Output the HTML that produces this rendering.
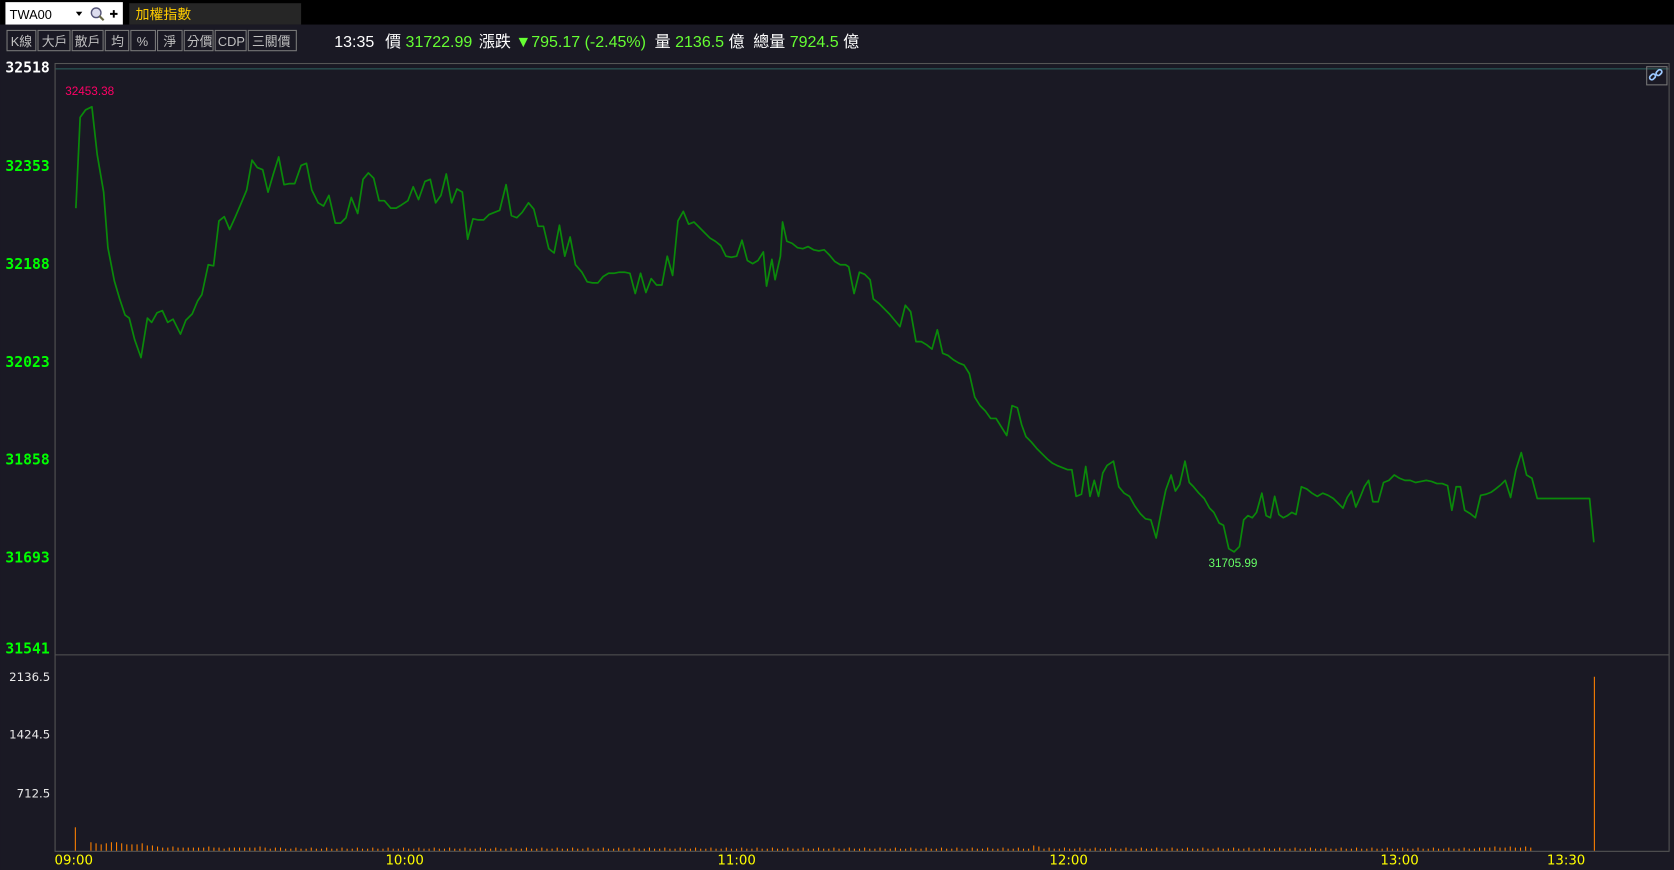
<!DOCTYPE html>
<html><head><meta charset="utf-8"><style>
html,body{margin:0;padding:0;background:#1a1924;overflow:hidden}
svg{display:block}
text{font-family:"Liberation Sans","Noto Sans CJK TC",sans-serif}
.lbl{font-family:"DejaVu Sans Mono","Liberation Mono",monospace;font-weight:bold;font-size:13.8px;fill:#00ff00}
.vl{font-family:"DejaVu Sans","Liberation Sans",sans-serif;font-size:11px;fill:#e8e8e8}
.tm{font-family:"DejaVu Sans","Liberation Sans",sans-serif;font-size:12.5px;fill:#ffff00}
.btn{fill:none;stroke:#7a7a7a;stroke-width:1}
.bt{font-size:12px;fill:#c0c0c0}
</style></head><body>
<svg width="1674" height="870" viewBox="0 0 1568 815" xmlns="http://www.w3.org/2000/svg">
<rect x="0" y="0" width="1568" height="815" fill="#1a1924"/>
<rect x="0" y="0" width="1568" height="23" fill="#000"/>
<rect x="5" y="2" width="110" height="21" fill="#fff"/>
<text x="9" y="18" font-size="12" fill="#000">TWA00</text>
<path d="M71 11 l6 0 l-3 4z" fill="#000"/>
<circle cx="90" cy="12" r="4.5" fill="#dde" stroke="#557" stroke-width="1.3"/>
<path d="M93 15 l4 4" stroke="#664" stroke-width="2"/>
<path d="M103 13h7M106.5 9.5v7" stroke="#000" stroke-width="1.8"/>
<rect x="121" y="3" width="161" height="20" fill="#262626"/>
<text x="127" y="18" font-size="13" fill="#ffcc00">加權指數</text>

<g>
<rect class="btn" x="6.5" y="28.5" width="27" height="19"/><text class="bt" x="10" y="43">K線</text>
<rect class="btn" x="35.5" y="28.5" width="30" height="19"/><text class="bt" x="39" y="43">大戶</text>
<rect class="btn" x="67.5" y="28.5" width="29" height="19"/><text class="bt" x="70" y="43">散戶</text>
<rect class="btn" x="98.5" y="28.5" width="22" height="19"/><text class="bt" x="104" y="43">均</text>
<rect class="btn" x="122.5" y="28.5" width="23" height="19"/><text class="bt" x="128" y="43">%</text>
<rect class="btn" x="147.5" y="28.5" width="23" height="19"/><text class="bt" x="153" y="43">淨</text>
<rect class="btn" x="172.5" y="28.5" width="27" height="19"/><text class="bt" x="175" y="43">分價</text>
<rect class="btn" x="201.5" y="28.5" width="29" height="19"/><text class="bt" x="204" y="43">CDP</text>
<rect class="btn" x="232.5" y="28.5" width="45" height="19"/><text class="bt" x="236" y="43">三關價</text>
</g>
<text x="313" y="44" font-size="15" fill="#fff">13:35 <tspan dx="6">價</tspan> <tspan fill="#66ff33">31722.99</tspan> <tspan dx="2">漲跌</tspan> <tspan fill="#66ff33">▼795.17 (-2.45%)</tspan> <tspan dx="4">量</tspan> <tspan fill="#66ff33">2136.5</tspan> 億 <tspan dx="4">總量</tspan> <tspan fill="#66ff33">7924.5</tspan> 億</text>

<rect x="51.5" y="59.5" width="1512" height="738" fill="none" stroke="#555" stroke-width="1"/>
<line x1="52" y1="64.5" x2="1563" y2="64.5" stroke="#2e6660" stroke-width="1"/>
<line x1="52" y1="613.5" x2="1563" y2="613.5" stroke="#555" stroke-width="1"/>
<rect x="1542.5" y="62.5" width="19" height="17" fill="none" stroke="#777"/>
<g fill="none" stroke="#9cc8ff" stroke-width="1.6">
<rect x="1545" y="70" width="6" height="4" rx="2" transform="rotate(-45 1548 72)"/>
<rect x="1551" y="66" width="6" height="4" rx="2" transform="rotate(-45 1554 68)"/>
</g>

<text class="lbl" x="5" y="68" style="fill:#fff">32518</text>
<text class="lbl" x="5" y="160">32353</text>
<text class="lbl" x="5" y="252">32188</text>
<text class="lbl" x="5" y="344">32023</text>
<text class="lbl" x="5" y="435">31858</text>
<text class="lbl" x="5" y="527">31693</text>
<text class="lbl" x="5" y="612">31541</text>

<text x="61" y="89" font-size="11" fill="#ff0066">32453.38</text>
<text x="1132" y="531" font-size="11" fill="#66ff66">31705.99</text>

<polyline fill="none" stroke="#0a8a0a" stroke-width="1.6" stroke-linejoin="round" points="71,195 75,110 80,103 86,100 91,145 97,180 101,232 107,263 112,280 117,295 121,298 126,318 132,335 138,298 142,302 147,293 152,291 157,302 162,299 169,313 174,300 180,294 185,282 189,276 195,248 200,249 205,207 210,203 215,215 220,204 226,190 231,178 236,150 241,157 246,159 251,180 256,163 261,147 266,173 271,172 276,172 282,155 287,153 292,178 298,190 303,193 308,183 314,209 319,209 324,204 329,185 335,200 340,168 345,162 350,167 355,188 360,188 366,195 371,195 376,192 382,188 387,175 392,187 398,170 403,168 408,190 413,183 418,163 423,190 428,177 433,180 438,224 443,205 448,206 453,206 458,201 463,199 468,197 474,173 479,202 484,204 489,199 495,190 500,196 504,212 509,212 514,233 519,237 524,211 529,240 534,222 539,248 545,255 550,264 555,265 560,265 565,259 570,256 575,256 580,255 585,255 590,256 595,275 600,256 605,274 610,261 615,267 620,267 625,240 630,258 635,207 640,198 645,210 650,208 655,213 660,218 665,223 670,226 675,230 680,240 685,241 690,240 695,225 700,244 705,247 710,244 715,236 718,268 723,243 726,262 731,240 733,208 737,226 742,228 747,232 752,233 757,231 762,234 767,235 772,234 777,239 782,245 787,248 792,248 795,250 800,275 805,255 810,257 815,262 818,280 823,284 828,289 833,294 838,300 843,306 848,286 853,292 858,320 863,320 868,323 873,327 878,309 883,331 888,333 893,337 898,340 903,342 908,350 913,372 918,380 923,385 928,392 933,392 938,400 943,408 948,380 953,382 957,398 961,409 966,414 971,420 976,425 981,430 986,434 990,436 995,438 1000,440 1004,440 1008,465 1013,463 1017,437 1021,465 1025,450 1029,465 1033,443 1037,436 1043,432 1048,456 1053,462 1058,465 1063,474 1068,481 1073,486 1078,487 1083,504 1088,478 1092,459 1097,445 1101,460 1105,454 1110,432 1114,452 1118,456 1123,462 1128,467 1133,476 1137,480 1142,490 1146,492 1151,514 1156,517 1161,512 1165,487 1169,483 1173,485 1177,480 1182,462 1186,483 1190,485 1194,465 1198,482 1202,485 1206,483 1210,480 1214,482 1219,456 1224,458 1229,462 1234,465 1239,462 1244,464 1249,467 1254,472 1258,476 1262,466 1266,460 1270,475 1274,466 1278,456 1282,450 1286,470 1291,470 1296,452 1301,450 1306,445 1311,448 1316,450 1321,450 1326,452 1331,451 1336,450 1341,451 1346,453 1351,453 1356,455 1360,478 1364,456 1368,456 1372,478 1377,481 1382,485 1387,464 1392,463 1397,461 1401,458 1406,454 1410,450 1415,466 1420,440 1425,424 1430,445 1435,448 1440,467 1489,467 1493,508"/>

<text class="vl" x="47" y="638" text-anchor="end">2136.5</text>
<text class="vl" x="47" y="692" text-anchor="end">1424.5</text>
<text class="vl" x="47" y="747" text-anchor="end">712.5</text>

<g id="vol" stroke="#ff8000" stroke-width="1">
<line x1="1493.5" y1="634" x2="1493.5" y2="797"/>
<line x1="70.5" y1="775" x2="70.5" y2="797"/>
</g>

<text class="tm" x="69" y="810" text-anchor="middle">09:00</text>
<text class="tm" x="379" y="810" text-anchor="middle">10:00</text>
<text class="tm" x="690" y="810" text-anchor="middle">11:00</text>
<text class="tm" x="1001" y="810" text-anchor="middle">12:00</text>
<text class="tm" x="1311" y="810" text-anchor="middle">13:00</text>
<text class="tm" x="1467" y="810" text-anchor="middle">13:30</text>
</svg>
<script>
(function(){
var g=document.getElementById('vol'),ns='http://www.w3.org/2000/svg';
var hs=[0,0,8,7,6,7,8,8,7,6,6,6,7,5,5,4,3,3,4,3,3,3,3,3,3,4,3,3,2,3,3,3,3,3,3,4,3,2,3];
var x=75.5,i=0;
while(x<1438){
 var h=i<hs.length?hs[i]:(2+((i*7)%3===0?1:0)+(x>1390?1:0)+((x>965&&x<975)?2:0));
 if(i>=2){var l=document.createElementNS(ns,'line');
 l.setAttribute('x1',x);l.setAttribute('x2',x);l.setAttribute('y1',797-h);l.setAttribute('y2',797);g.appendChild(l);}
 x+=4.8;i++;
}
})();
</script>
</body></html>
